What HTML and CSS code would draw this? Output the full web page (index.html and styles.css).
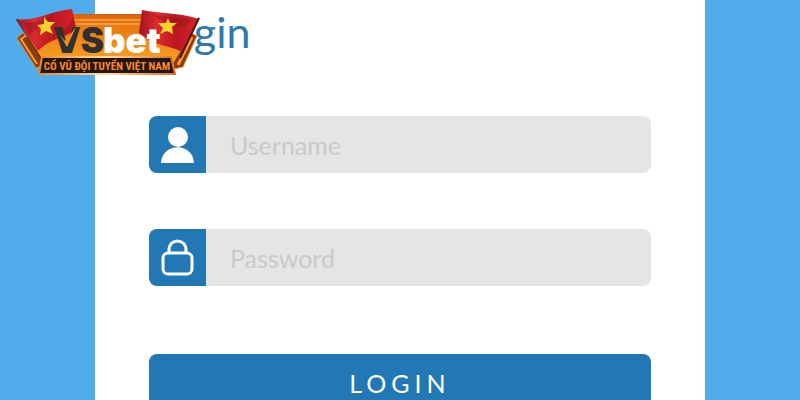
FILE: index.html
```html
<!DOCTYPE html>
<html lang="vi">
  <head>
    <meta charset="utf-8">
    <meta name="viewport" content="width=device-width, initial-scale=1">
    <title>Login</title>
    <link rel="stylesheet" href="styles.css">
  </head>

  <body>
    <svg class="brand" viewBox="0 0 200 80" role="img" aria-label="VSbet">
      <defs>
        <linearGradient id="gold" x1="0" y1="0" x2="0" y2="1">
          <stop offset="0" stop-color="#d9600f"/>
          <stop offset="0.2" stop-color="#e8760f"/>
          <stop offset="1" stop-color="#f9a024"/>
        </linearGradient>
        <linearGradient id="red" x1="0" y1="0" x2="1" y2="0">
          <stop offset="0" stop-color="#a31620"/>
          <stop offset="0.3" stop-color="#dc2a30"/>
          <stop offset="0.6" stop-color="#bb1822"/>
          <stop offset="1" stop-color="#d8232b"/>
        </linearGradient>
        <linearGradient id="edge" x1="0" y1="0" x2="1" y2="0">
          <stop offset="0" stop-color="#e8862a"/>
          <stop offset="0.5" stop-color="#ffe0a0"/>
          <stop offset="1" stop-color="#d8741c"/>
        </linearGradient>
      </defs>

      <!-- plate -->
      <path d="M23 33 L17 38 L36 68 L42 66 L46 56 Z" fill="#8a3a0c" stroke="#e8862a" stroke-width="1"/>
      <path d="M27 35 L21 39 L37 64" fill="none" stroke="#f7a13c" stroke-width="2"/>
      <path d="M191 33 L197 36 L183 67 L174 69 L172 56 Z" fill="#8a3a0c" stroke="#f0973a" stroke-width="1"/>
      <path d="M70 14 H146 L191 34 L174 62 H44 L28 38 Z" fill="url(#gold)"/>
      <path d="M72 20 H143 M72 24 H144" stroke="#ffc069" stroke-width="1"/>
      <path d="M192 37 L178 65" stroke="#f59a35" stroke-width="3"/>

      <!-- flags -->
      <path d="M16 19 C35 22 50 11 72 9 L76 27 C68 40 54 35 38 51 Z" fill="url(#red)"/>
      <path d="M25 22 C36 25 43 19 54 15 C48 27 36 27 29 35 Z M56 36 C62 30 67 31 73 17 L76 27 C70 35 64 34 56 36 Z" fill="#780e18" opacity="0.35"/>
      <path d="M16 19 L41 58" stroke="#5a2018" stroke-width="1"/>
      <path d="M44 17 L48 22 L55 22 L50 27 L53 34 L46 31 L40 35 L41 29 L37 25 L44 24 Z" fill="#f7d32c"/>
      <path d="M142 10 C160 14 178 12 199 19 L182 52 C170 45 158 48 139 33 Z" fill="url(#red)"/>
      <path d="M151 14 C164 18 178 16 192 20 L184 28 C170 25 160 20 151 14 Z" fill="#780e18" opacity="0.3"/>
      <path d="M199 18 L180 58" stroke="#4a1712" stroke-width="2"/>
      <path d="M168 18 L170 23 L177 23 L172 27 L173 34 L167 31 L160 34 L163 28 L158 23 L166 23 Z" fill="#f7d32c"/>

      <text class="brand-name" y="53"><tspan class="brand-dark" x="53">VS</tspan><tspan x="103">bet</tspan></text>
      <path d="M60 35 L65 41 L76 27 L67 47 Z" fill="#f58b18"/>

      <!-- slogan strip -->
      <path d="M42 57 H171 L175 74 H39 Z" fill="#24150f" stroke="url(#edge)" stroke-width="2"/>
      <text class="brand-slogan" x="107" y="70" text-anchor="middle">CỔ VŨ ĐỘI TUYỂN VIỆT NAM</text>
    </svg>

    <main class="panel">
      <h1>Login</h1>
      <form class="login-form">
        <div class="field">
          <label for="username" aria-label="Username">
            <svg class="icon" viewBox="0 0 34 38">
              <circle cx="17" cy="11" r="10" fill="#fff"/>
              <path d="M0 37 C1 16 32 16 33 37 Z" fill="#fff"/>
            </svg>
          </label>
          <input type="text" id="username" placeholder="Username">
        </div>
        <div class="field">
          <label for="password" aria-label="Password">
            <svg class="icon" viewBox="0 0 34 38" fill="none" stroke="#fff" stroke-width="3">
              <rect x="2" y="14" width="29" height="21" rx="5"/>
              <path d="M8 14 V11 C8 -1 25 -1 25 11 V14"/>
            </svg>
          </label>
          <input type="password" id="password" placeholder="Password">
        </div>
        <button type="submit">LOGIN</button>
      </form>
    </main>
  </body>
</html>
```
FILE: styles.css
```css
* {
  box-sizing: border-box;
}

body {
  margin: 0;
  height: 100vh;
  overflow: hidden;
  background-color: #50acea;
  font-family: Lato, "Open Sans", sans-serif;
}

.panel {
  width: 76.25%;
  min-height: 100vh;
  margin: 0 auto;
  padding: 6px 54px 48px;
  background-color: white;
}

h1 {
  margin: 0;
  color: #2e78ae;
  font-size: 43px;
  font-weight: 400;
  line-height: 52px;
}

.login-form {
  display: flex;
  flex-direction: column;
  gap: 56px;
  margin-top: 58px;
}

.field {
  display: flex;
  height: 57px;
  border-radius: 8px;
  overflow: hidden;
  background-color: #e5e5e5;
}

.field label {
  display: flex;
  align-items: center;
  justify-content: center;
  width: 57px;
  background-color: #2178b4;
}

.icon {
  width: 34px;
  height: 38px;
}

.field input {
  flex: 1;
  min-width: 0;
  padding: 0 24px;
  border: none;
  background: none;
  color: #555;
  font-family: inherit;
  font-size: 25px;
}

.field input::placeholder {
  color: #c9c9c9;
  opacity: 1;
}

.login-form button {
  height: 57px;
  margin-top: 12px;
  border: none;
  border-radius: 8px;
  background-color: #2178b4;
  color: white;
  font-family: inherit;
  font-size: 25px;
  letter-spacing: 5px;
  cursor: pointer;
}

.brand {
  position: absolute;
  top: 0;
  left: 0;
  width: 200px;
  height: 80px;
}

.brand-name {
  fill: white;
  font-family: Inter, sans-serif;
  font-size: 35px;
  font-weight: 900;
}

.brand-dark {
  fill: #303030;
}

.brand-slogan {
  fill: #f98a2c;
  font-family: "Roboto Condensed", "Liberation Sans Narrow", Roboto, sans-serif;
  font-size: 11px;
  font-weight: 700;
}
```
